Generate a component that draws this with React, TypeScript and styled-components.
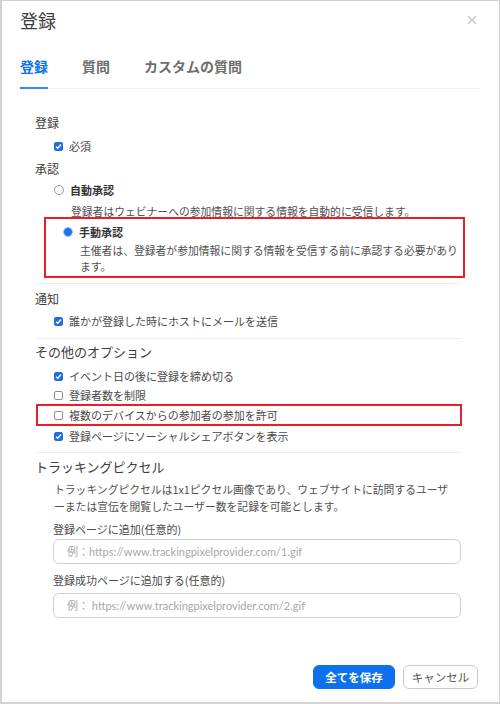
import React from "react";
import styled, { createGlobalStyle } from "styled-components";

const Global = createGlobalStyle`
  html, body { margin: 0; padding: 0; background: #ffffff; }
  body { font-family: "Noto Sans CJK JP", "Noto Sans", sans-serif; }
  * { box-sizing: border-box; }
`;

const Frame = styled.div`
  width: 500px;
  height: 704px;
  border: 1px solid #d2d2d2;
  border-left-width: 2px;
  border-bottom-width: 2px;
  display: flex;
  flex-direction: column;
  background: #fff;
  position: relative;
`;

const Header = styled.div`
  height: 39px;
  padding: 0 0 0 18px;
  display: flex;
  align-items: center;
  justify-content: space-between;
`;

const Title = styled.h1`
  margin: 0;
  font-size: 18px;
  font-weight: 400;
  line-height: 39px;
  color: #3c3c3c;
`;

const CloseBtn = styled.button`
  border: 0;
  background: none;
  padding: 0;
  width: 10px;
  height: 10px;
  margin-right: 22px;
  margin-top: -2px;
  display: flex;
  cursor: pointer;
`;

const Tabs = styled.div`
  margin: 0 20px 0 18px;
  display: flex;
  gap: 34px;
  border-bottom: 1px solid #f0f0f0;
`;

const Tab = styled.div<{ $active?: boolean }>`
  padding-top: 16px;
  padding-bottom: 11px;
  font-size: 14px;
  font-weight: 700;
  line-height: 20px;
  color: ${(p) => (p.$active ? "#0e72ed" : "#6e6e6e")};
  border-bottom: 2px solid ${(p) => (p.$active ? "#2d8cff" : "transparent")};
  margin-bottom: -1px;
`;

const Body = styled.div`
  padding: 24px 37px 0 33px;
  display: flex;
  flex-direction: column;
`;

const SectionTitle = styled.div<{ $big?: boolean; $mt?: number }>`
  font-size: ${(p) => (p.$big ? "13px" : "12px")};
  line-height: 20px;
  color: #3d3d3d;
  margin-top: ${(p) => p.$mt ?? 0}px;
`;

const Row = styled.label<{ $mt?: number; $h?: number }>`
  display: flex;
  align-items: center;
  gap: 6px;
  padding-left: 19px;
  height: ${(p) => p.$h ?? 20}px;
  margin-top: ${(p) => p.$mt ?? 0}px;
  font-size: 11px;
  color: #4a4a4a;
  white-space: nowrap;
`;

const RowText = styled.span<{ $bold?: boolean }>`
  font-weight: ${(p) => (p.$bold ? 700 : 400)};
  color: ${(p) => (p.$bold ? "#333" : "#4a4a4a")};
`;

const Box = styled.span<{ $checked?: boolean }>`
  width: 9px;
  height: 9px;
  border-radius: 2px;
  flex: none;
  display: flex;
  align-items: center;
  justify-content: center;
  background: ${(p) => (p.$checked ? "#1f6fe0" : "#fff")};
  border: 1px solid ${(p) => (p.$checked ? "#1f6fe0" : "#8e8e8e")};
`;

const Radio = styled.span<{ $checked?: boolean }>`
  width: 10px;
  height: 10px;
  border-radius: 50%;
  flex: none;
  border: 1px solid ${(p) => (p.$checked ? "#8cb8f2" : "#9a9a9a")};
  background: ${(p) =>
    p.$checked ? "radial-gradient(circle, #1e6ff0 0 3.5px, #5a9af5 4px)" : "#fff"};
`;

const Desc = styled.div<{ $lh?: number; $mt?: number; $pl?: number }>`
  padding-left: ${(p) => p.$pl ?? 35}px;
  font-size: 10.8px;
  line-height: ${(p) => p.$lh ?? 16}px;
  margin-top: ${(p) => p.$mt ?? 0}px;
  color: #4f4f4f;
  white-space: nowrap;
`;

const Highlight = styled.div<{ $ml: number; $mr: number; $mt?: number; $pl: number }>`
  border: 2px solid #e4202c;
  margin-left: ${(p) => p.$ml}px;
  margin-right: ${(p) => p.$mr}px;
  margin-top: ${(p) => p.$mt ?? 0}px;
  & > * {
    margin-left: ${(p) => p.$pl}px;
  }
`;

const Divider = styled.hr<{ $mt: number }>`
  border: 0;
  height: 1px;
  background: #efefef;
  margin: ${(p) => p.$mt}px 0 0 0;
`;

const FieldLabel = styled.div<{ $mt: number }>`
  padding-left: 18px;
  font-size: 11px;
  line-height: 18px;
  color: #4a4a4a;
  margin-top: ${(p) => p.$mt}px;
`;

const Input = styled.input<{ $mt: number }>`
  margin: ${(p) => p.$mt}px 0 0 18px;
  width: 408px;
  height: 25px;
  border: 1px solid #cfcfdc;
  border-radius: 6px;
  padding: 0 0 0 13px;
  font-family: Lato, "Noto Sans CJK JP", sans-serif;
  font-size: 11px;
  color: #333;
  outline: none;
  &::placeholder {
    color: #a8a8a8;
  }
`;

const Footer = styled.div`
  margin-top: auto;
  display: flex;
  justify-content: flex-end;
  gap: 8px;
  padding: 0 21px 13px 0;
`;

const Button = styled.button<{ $primary?: boolean }>`
  height: 24px;
  border-radius: 6px;
  font-family: "Noto Sans CJK JP", sans-serif;
  font-size: 11.5px;
  font-weight: ${(p) => (p.$primary ? 700 : 400)};
  padding: 0;
  width: ${(p) => (p.$primary ? 82 : 75)}px;
  background: ${(p) => (p.$primary ? "#0e71eb" : "#fff")};
  color: ${(p) => (p.$primary ? "#fff" : "#555")};
  border: 1px solid ${(p) => (p.$primary ? "#0e71eb" : "#c9c9d2")};
  cursor: pointer;
`;

const Check = ({ checked }: { checked?: boolean }) => (
  <Box $checked={checked}>
    {checked && (
      <svg width="7" height="7" viewBox="0 0 8 8">
        <path d="M1.2 4.2 L3.2 6 L6.8 1.8" stroke="#fff" strokeWidth="1.6" fill="none" />
      </svg>
    )}
  </Box>
);

export default function App() {
  return (
    <>
      <Global />
      <Frame>
        <Header>
          <Title>登録</Title>
          <CloseBtn aria-label="close">
            <svg width="10" height="10" viewBox="0 0 10 10">
              <path d="M1 1 L9 9 M9 1 L1 9" stroke="#c4c4c4" strokeWidth="1.3" />
            </svg>
          </CloseBtn>
        </Header>
        <Tabs>
          <Tab $active>登録</Tab>
          <Tab>質問</Tab>
          <Tab>カスタムの質問</Tab>
        </Tabs>
        <Body>
          <SectionTitle>登録</SectionTitle>
          <Row $mt={3}>
            <Check checked />
            <RowText>必須</RowText>
          </Row>
          <SectionTitle $mt={3}>承認</SectionTitle>
          <Row $mt={1}>
            <Radio />
            <RowText $bold>自動承認</RowText>
          </Row>
          <Desc $lh={14} $mt={4} $pl={36}>
            登録者はウェビナーへの参加情報に関する情報を自動的に受信します。
          </Desc>
          <Highlight $ml={9} $mr={-3} $mt={-1} $pl={-2}>
            <Row $mt={3}>
              <Radio $checked />
              <RowText $bold>手動承認</RowText>
            </Row>
            <Desc $pl={36} $mt={0}>
              主催者は、登録者が参加情報に関する情報を受信する前に承認する必要があり
              <br />
              ます。
            </Desc>
            <div style={{ height: 2 }} />
          </Highlight>
          <Divider $mt={5} />
          <SectionTitle $mt={5}>通知</SectionTitle>
          <Row $mt={2}>
            <Check checked />
            <RowText>誰かが登録した時にホストにメールを送信</RowText>
          </Row>
          <Divider $mt={7} />
          <SectionTitle $big $mt={3}>その他のオプション</SectionTitle>
          <Row $mt={4}>
            <Check checked />
            <RowText>イベント日の後に登録を締め切る</RowText>
          </Row>
          <Row $h={18}>
            <Check />
            <RowText>登録者数を制限</RowText>
          </Row>
          <Highlight $ml={1} $mr={0} $pl={-3}>
            <Row $h={18}>
              <Check />
              <RowText>複数のデバイスからの参加者の参加を許可</RowText>
            </Row>
          </Highlight>
          <Row>
            <Check checked />
            <RowText>登録ページにソーシャルシェアボタンを表示</RowText>
          </Row>
          <Divider $mt={6} />
          <SectionTitle $big $mt={4}>トラッキングピクセル</SectionTitle>
          <Desc $lh={17} $mt={4} $pl={19}>
            トラッキングピクセルは1x1ピクセル画像であり、ウェブサイトに訪問するユーザ
            <br />
            ーまたは宣伝を閲覧したユーザー数を記録を可能とします。
          </Desc>
          <FieldLabel $mt={5}>登録ページに追加(任意的)</FieldLabel>
          <Input $mt={1} placeholder="例：https://www.trackingpixelprovider.com/1.gif" />
          <FieldLabel $mt={7}>登録成功ページに追加する(任意的)</FieldLabel>
          <Input $mt={4} placeholder="例： https://www.trackingpixelprovider.com/2.gif" />
        </Body>
        <Footer>
          <Button $primary>全てを保存</Button>
          <Button>キャンセル</Button>
        </Footer>
      </Frame>
    </>
  );
}
